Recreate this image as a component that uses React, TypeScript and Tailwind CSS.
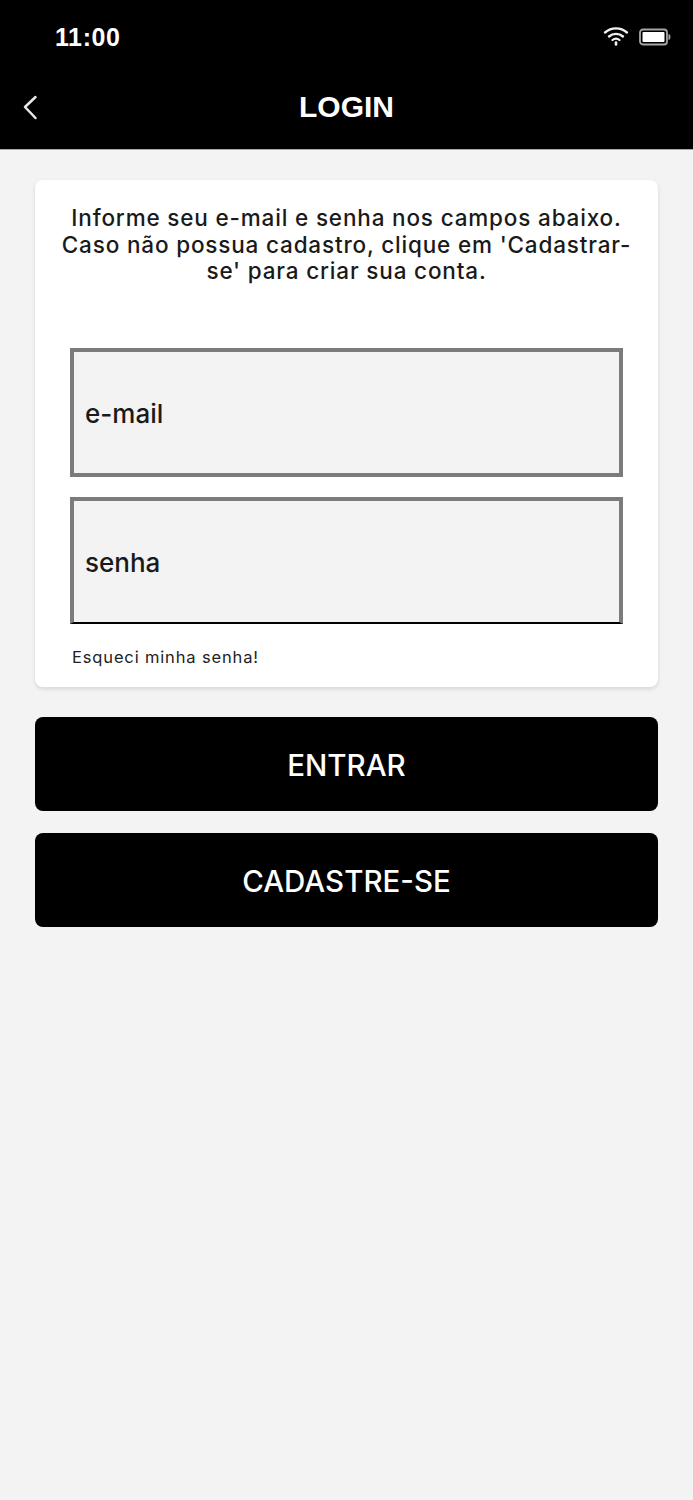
import React from "react";

const font = "font-['Inter','Liberation_Sans',sans-serif]";

export default function App() {
  return (
    <div className={`flex h-[1500px] w-[693px] flex-col overflow-hidden bg-[#f3f3f3] ${font}`}>
      <header className="h-[150px] shrink-0 border-b border-[#a8a8a8] bg-black text-white">
        <div className="flex h-[74px] items-start justify-between pl-[55px] pr-[22px] pt-[22px]">
          <span className="font-['Liberation_Sans',sans-serif] text-[25px] font-bold leading-[30px] tracking-[0.6px]">11:00</span>
          <div className="flex items-center gap-[10px] pt-[4px]">
            <svg width="26" height="20" viewBox="0 0 26 20" fill="none" stroke="#f2f2f2" strokeLinecap="round">
              <path d="M2 6.500C8.500 1 17.500 1 24 6.500" strokeWidth="2.400" />
              <path d="M6 10.500C10 7 16 7 20 10.500" strokeWidth="2.400" />
              <path d="M9.500 14C11.800 12.200 14.200 12.200 16.500 14" strokeWidth="2.200" />
              <path d="M13 16.500V18.500" strokeWidth="2.600" />
            </svg>
            <svg width="32" height="20" viewBox="0 0 32 20" fill="none">
              <rect x="1" y="3.500" width="27" height="15" rx="3" stroke="#a6a6a6" strokeWidth="1.800" />
              <rect x="3.500" y="6" width="22" height="10" rx="1" fill="#fff" />
              <path d="M30 8.500C31.300 9.200 31.300 12.800 30 13.500Z" fill="#a6a6a6" stroke="#a6a6a6" />
            </svg>
          </div>
        </div>
        <div className="relative flex h-[66px] items-center justify-center">
          <svg className="absolute left-[22px] top-[20px]" width="16" height="26" viewBox="0 0 16 26" fill="none" stroke="#e8e8e8" strokeWidth="2.500" strokeLinecap="round" strokeLinejoin="round">
            <path d="M13.500 3L3 13L13.500 24" />
          </svg>
          <h1 className="font-['Liberation_Sans',sans-serif] text-[30px] font-bold leading-none">LOGIN</h1>
        </div>
      </header>

      <main className="flex flex-col px-[35px] pt-[30px]">
        <section className="flex h-[507px] flex-col rounded-[8px] bg-white px-[35px] pt-[25px] shadow-[0_2px_4px_rgba(0,0,0,0.12)]">
          <p className="-mx-[20px] text-center text-[22.500px] font-medium leading-[26.500px] tracking-[0.83px] text-[#1a1a1a]">
            Informe seu e-mail e senha nos campos abaixo.
            <br />
            Caso não possua cadastro, clique em 'Cadastrar-
            <br />
            se' para criar sua conta.
          </p>
          <div className="mt-[63.500px] flex h-[129px] items-center border-4 border-[#7b7b7b] bg-[#f3f3f3] pl-[11px]">
            <span className="mt-[3px] text-[26px] font-[450] leading-none text-[#1a1a1a]">e-mail</span>
          </div>
          <div className="mt-[20px] flex h-[127px] items-center border-4 border-b-2 border-[#7b7b7b] border-b-black bg-[#f3f3f3] pl-[11px]">
            <span className="mt-[3px] text-[26px] font-[450] leading-none text-[#1a1a1a]">senha</span>
          </div>
          <a className="ml-[2px] mt-[23px] text-[16.500px] leading-5 tracking-[0.85px] text-[#222]">Esqueci minha senha!</a>
        </section>

        <button className="mt-[30px] flex h-[94px] items-center justify-center rounded-[8px] bg-black pt-[2px] text-[29.500px] font-[450] text-white">
          ENTRAR
        </button>
        <button className="mt-[22px] flex h-[94px] items-center justify-center rounded-[8px] bg-black pt-[2px] text-[29.500px] font-[450] text-white">
          CADASTRE-SE
        </button>
      </main>
    </div>
  );
}
